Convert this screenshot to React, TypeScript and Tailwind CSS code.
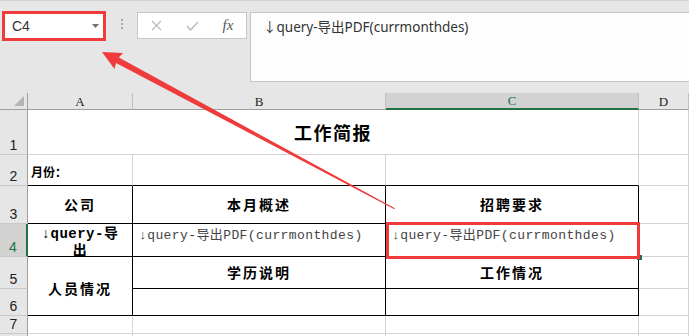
import React from "react";

const HDR =
  "bg-[#e6e6e6] border-r border-b border-r-[#9e9e9e] border-b-[#c8c8c8] flex items-end justify-center pb-[2px] text-[14px] leading-none text-[#222] font-['Liberation_Sans',sans-serif]";
const HDR_SEL =
  "bg-[#d2d2d2] border-r-2 border-b border-r-[#217346] border-b-[#c8c8c8] flex items-end justify-center pb-[2px] text-[14px] leading-none text-[#217346] font-['Liberation_Sans',sans-serif]";
const COL =
  "bg-[#e6e6e6] border-r border-b border-r-[#c0c0c0] border-b-[#9e9e9e] flex items-center justify-center text-[13px] leading-none text-[#222] font-['Liberation_Serif',serif]";
const COL_SEL =
  "bg-[#d2d2d2] border-r border-b-2 border-r-[#c0c0c0] border-b-[#217346] flex items-center justify-center text-[13px] leading-none text-[#217346] font-['Liberation_Serif',serif]";
const LL = "border-r border-b border-[#d4d4d4]";
const BB = "border-r border-b border-black";
const LB = "border-r border-b border-r-[#d4d4d4] border-b-black";
const CJKB =
  "font-['Noto_Sans_CJK_SC',sans-serif] font-bold text-[14px] tracking-[2px] text-black";
const MONO =
  "font-['Liberation_Mono','Noto_Sans_CJK_SC',monospace] text-[13px] leading-[17px] tracking-[0.4px] text-[#444] whitespace-nowrap";

export default function App() {
  return (
    <div className="relative w-[689px] h-[336px] overflow-hidden bg-white">
      {/* Toolbar / formula bar */}
      <div className="h-[93px] bg-[#e6e6e6] border-t border-[#d0d0d0] flex items-start pt-[10px] pl-[2px]">
        <div className="w-[104px] h-[30px] bg-white border-[3px] border-[#ef3b3b] flex items-center justify-between pl-[7px] pr-[4px]">
          <span className="text-[14px] text-[#333] font-['Liberation_Sans',sans-serif]">C4</span>
          <svg width="7" height="4" viewBox="0 0 7 4">
            <path d="M0 0 L7 0 L3.5 4 Z" fill="#707070" />
          </svg>
        </div>
        <div className="ml-[15px] mt-[8px] flex flex-col gap-[2px]">
          <div className="w-[2px] h-[2px] bg-[#a8a8a8]" />
          <div className="w-[2px] h-[2px] bg-[#a8a8a8]" />
          <div className="w-[2px] h-[2px] bg-[#a8a8a8]" />
        </div>
        <div className="ml-[14px] mt-[1px] w-[110px] h-[27px] bg-white border border-[#c6c6c6] flex items-center">
          <div className="w-[36px] flex justify-center">
            <svg width="11" height="11" viewBox="0 0 11 11">
              <path d="M1 1 L10 10 M10 1 L1 10" stroke="#bcbcbc" strokeWidth="1.3" />
            </svg>
          </div>
          <div className="w-[36px] flex justify-center">
            <svg width="13" height="10" viewBox="0 0 13 10">
              <path d="M1 5 L4.5 9 L12 1" stroke="#bcbcbc" strokeWidth="1.5" fill="none" />
            </svg>
          </div>
          <div className="w-[36px] flex justify-center">
            <span className="italic font-['Liberation_Serif',serif] text-[15px] text-[#555] leading-none">
              fx
            </span>
          </div>
        </div>
        <div className="ml-[3px] mt-[1px] flex-1 h-[70px] bg-[#fdfdfd] border border-r-0 border-[#c6c6c6] pl-[12px] pt-[1px]">
          <span className="text-[13.5px] leading-[20px] text-[#333] font-['Noto_Sans','Noto_Sans_CJK_SC',sans-serif]">
            ↓query-导出PDF(currmonthdes)
          </span>
        </div>
      </div>

      {/* Sheet grid */}
      <div className="grid grid-cols-[28px_105px_253px_253px_50px] grid-rows-[17px_45px_31px_38px_33px_32px_27px_18px_18px]">
        {/* header row */}
        <div className="relative bg-[#e6e6e6] border-r border-b border-[#9e9e9e]">
          <svg className="absolute right-[3px] bottom-[3px]" width="10" height="10" viewBox="0 0 10 10">
            <path d="M10 0 L10 10 L0 10 Z" fill="#b4b4b4" />
          </svg>
        </div>
        <div className={COL}>A</div>
        <div className={COL}>B</div>
        <div className={COL_SEL}>C</div>
        <div className={COL}>D</div>

        {/* row 1 */}
        <div className={HDR}>1</div>
        <div className={`col-span-3 ${LL} flex items-center justify-center`}>
          <span className="font-['Noto_Sans_CJK_SC',sans-serif] font-bold text-[18px] tracking-[1.5px] text-black">
            工作简报
          </span>
        </div>
        <div className={LL} />

        {/* row 2 */}
        <div className={HDR}>2</div>
        <div className={`${LB} flex items-center pl-[3px] pt-[4px]`}>
          <span className="font-['Noto_Sans_CJK_SC',sans-serif] font-bold text-[12px] text-black">月份：</span>
        </div>
        <div className={LB} />
        <div className={LB} />
        <div className={LL} />

        {/* row 3 */}
        <div className={HDR}>3</div>
        <div className={`${BB} flex items-center justify-center`}>
          <span className={CJKB}>公司</span>
        </div>
        <div className={`${BB} flex items-center justify-center`}>
          <span className={CJKB}>本月概述</span>
        </div>
        <div className={`${BB} flex items-center justify-center`}>
          <span className={CJKB}>招聘要求</span>
        </div>
        <div className={LL} />

        {/* row 4 */}
        <div className={HDR_SEL}>4</div>
        <div className={`${BB} flex flex-col items-center pt-[2px] overflow-hidden font-['Liberation_Mono','Noto_Sans_CJK_SC',monospace] font-bold text-[14px] leading-[17px] tracking-[0.5px] text-black whitespace-nowrap`}>
          <span>↓query-导</span>
          <span>出</span>
        </div>
        <div className={`${BB} flex items-start pl-[6px] pt-[3px] overflow-hidden`}>
          <span className={MONO}>↓query-导出PDF(currmonthdes)</span>
        </div>
        <div className={`${BB} flex items-start pl-[6px] pt-[3px] overflow-hidden`}>
          <span className={MONO}>↓query-导出PDF(currmonthdes)</span>
        </div>
        <div className={LL} />

        {/* row 5 */}
        <div className={HDR}>5</div>
        <div className={`row-span-2 ${BB} flex items-center justify-center pt-[4px]`}>
          <span className={CJKB}>人员情况</span>
        </div>
        <div className={`${BB} flex items-center justify-center`}>
          <span className={CJKB}>学历说明</span>
        </div>
        <div className={`${BB} flex items-center justify-center`}>
          <span className={CJKB}>工作情况</span>
        </div>
        <div className={LL} />

        {/* row 6 */}
        <div className={HDR}>6</div>
        <div className={BB} />
        <div className={BB} />
        <div className={LL} />

        {/* row 7 */}
        <div className={HDR}>7</div>
        <div className={LL} />
        <div className={LL} />
        <div className={LL} />
        <div className={LL} />

        {/* row 8 (only its top edge is in view) */}
        <div className={HDR} />
        <div className={LL} />
        <div className={LL} />
        <div className={LL} />
        <div className={LL} />
      </div>

      {/* annotation: selection highlight on C4 */}
      <div className="absolute left-[637px] top-[255px] w-[5px] h-[5px] bg-[#217346]" />
      <div className="absolute left-[386px] top-[222px] w-[254px] h-[37px] border-[3px] border-[#ef3b3b]" />

      {/* annotation arrow */}
      <svg className="absolute inset-0 pointer-events-none" width="689" height="336" viewBox="0 0 689 336">
        <g transform="translate(102 52) rotate(28.18)">
          <polygon
            points="0,0 19,-9 17.5,-3 332,-0.5 332,0.5 17.5,3 19,9"
            fill="#ef3b3b"
          />
        </g>
      </svg>
    </div>
  );
}
